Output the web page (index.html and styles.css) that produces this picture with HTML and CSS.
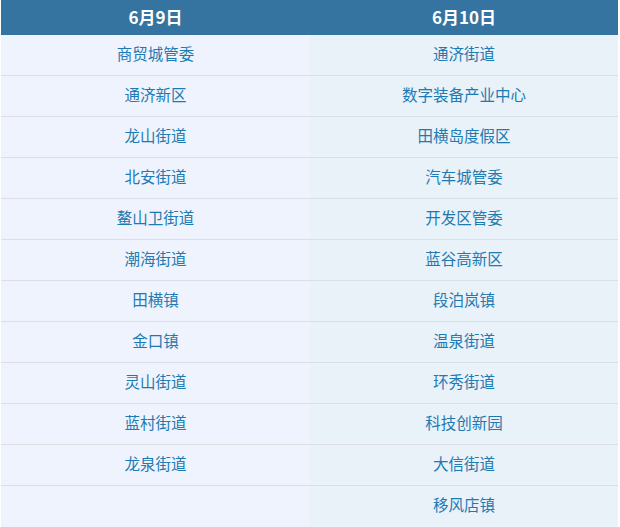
FILE: index.html
```html
<!DOCTYPE html>
<html lang="zh">
<head>
<meta charset="utf-8">
<link rel="stylesheet" href="styles.css">
</head>
<body>
<div class="table">
  <div class="head">6月9日</div>
  <div class="head">6月10日</div>
  <div class="cell l">商贸城管委</div><div class="cell r">通济街道</div>
  <div class="cell l">通济新区</div><div class="cell r">数字装备产业中心</div>
  <div class="cell l">龙山街道</div><div class="cell r">田横岛度假区</div>
  <div class="cell l">北安街道</div><div class="cell r">汽车城管委</div>
  <div class="cell l">鳌山卫街道</div><div class="cell r">开发区管委</div>
  <div class="cell l">潮海街道</div><div class="cell r">蓝谷高新区</div>
  <div class="cell l">田横镇</div><div class="cell r">段泊岚镇</div>
  <div class="cell l">金口镇</div><div class="cell r">温泉街道</div>
  <div class="cell l">灵山街道</div><div class="cell r">环秀街道</div>
  <div class="cell l">蓝村街道</div><div class="cell r">科技创新园</div>
  <div class="cell l">龙泉街道</div><div class="cell r">大信街道</div>
  <div class="cell l last"></div><div class="cell r last">移风店镇</div>
</div>
</body>
</html>
```
FILE: styles.css
```css
html, body {
  margin: 0;
  padding: 0;
  background: #ffffff;
}
body {
  font-family: "Noto Sans CJK SC", "Noto Sans", sans-serif;
}
.table {
  margin-left: 1px;
  width: 617px;
  display: grid;
  grid-template-columns: 309px 308px;
}
.head {
  height: 35px;
  padding-bottom: 2px;
  box-sizing: border-box;
  background: #3574a1;
  color: #ffffff;
  font-weight: bold;
  font-size: 17px;
  display: flex;
  align-items: center;
  justify-content: center;
}
.cell {
  height: 40px;
  padding-bottom: 3px;
  box-sizing: content-box;
  border-bottom: 1px solid #dcdee2;
  display: flex;
  align-items: center;
  justify-content: center;
  color: #1d7bb2;
  font-size: 15.5px;
  line-height: 1;
}
.cell {
  height: 37px;
}
.cell.last {
  height: 38px;
  border-bottom: none;
}
.l {
  background: #eff3fd;
}
.r {
  background: #e9f1f9;
}
```
